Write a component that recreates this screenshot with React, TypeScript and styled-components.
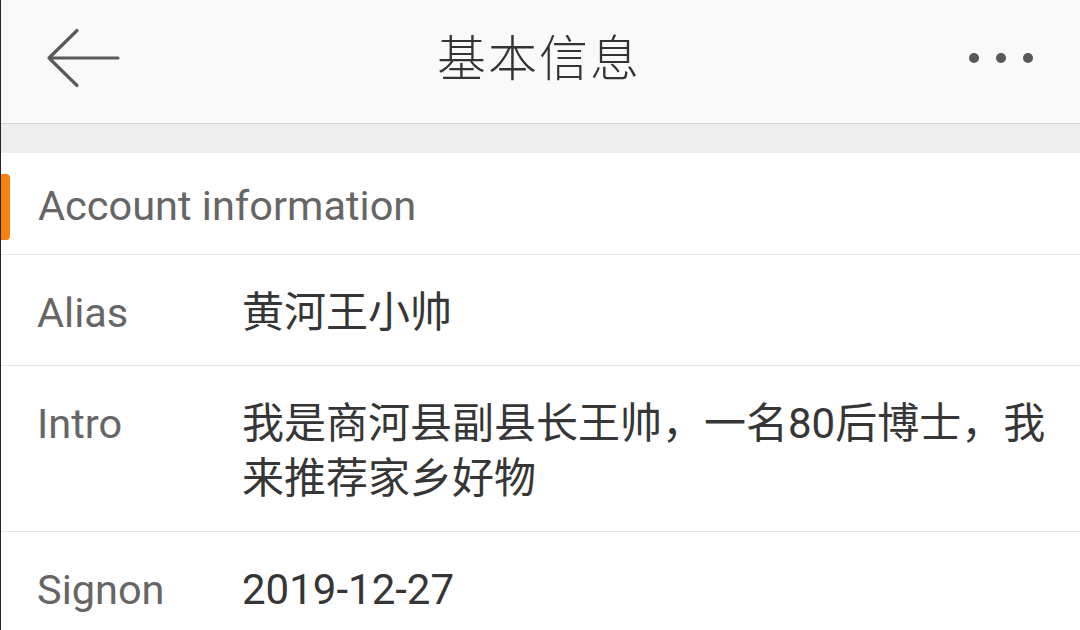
import React from "react";
import styled, { createGlobalStyle } from "styled-components";

const GlobalStyle = createGlobalStyle`
  html, body {
    margin: 0;
    padding: 0;
    background: #ffffff;
    overflow: hidden;
  }
  * { box-sizing: border-box; }
`;

const Page = styled.div`
  width: 1080px;
  height: 630px;
  overflow: hidden;
  border-left: 1px solid #262626;
  background: #fefefe;
  font-family: "Roboto", "Noto Sans CJK SC", sans-serif;
`;

const Header = styled.header`
  height: 124px;
  background: #f9f9f9;
  border-bottom: 1px solid #d2d2d2;
  display: grid;
  grid-template-columns: 1fr auto 1fr;
  align-items: center;
  padding: 0 47px 8px 44px;
`;

const BackButton = styled.button`
  justify-self: start;
  border: none;
  background: none;
  padding: 0;
  display: flex;
  cursor: pointer;
`;

const Title = styled.h1`
  margin: 0 0 6px;
  font-family: "Noto Sans CJK SC", sans-serif;
  font-size: 49px;
  font-weight: 300;
  color: #333333;
  letter-spacing: 2px;
  line-height: 1;
`;

const MoreButton = styled.div`
  justify-self: end;
  display: flex;
  gap: 17px;
  align-items: center;
`;

const Dot = styled.span`
  width: 10px;
  height: 10px;
  border-radius: 50%;
  background: #585858;
`;

const Band = styled.div`
  height: 29px;
  background: #eeeeee;
`;

const SectionHead = styled.div`
  height: 102px;
  display: flex;
  align-items: center;
  border-bottom: 1px solid #e6e6e6;
  background: #ffffff;
`;

const Accent = styled.span`
  width: 9px;
  height: 66px;
  background: #f7830e;
  border-radius: 0 4px 4px 0;
  margin-top: 6px;
`;

const SectionTitle = styled.span`
  margin-left: 28px;
  font-size: 41.5px;
  color: #666666;
  margin-top: 4px;
`;

const Row = styled.div`
  display: grid;
  grid-template-columns: 205px 1fr;
  align-items: start;
  padding: 30px 20px 25px 36px;
  border-bottom: 1px solid #e7e4e8;
  background: #ffffff;
`;

const Label = styled.span`
  font-size: 41.5px;
  line-height: 55px;
  color: #666666;
`;

const Value = styled.span`
  font-size: 42px;
  line-height: 55px;
  color: #363636;
`;

const rows = [
  { label: "Alias", value: "黄河王小帅" },
  { label: "Intro", value: "我是商河县副县长王帅，一名80后博士，我来推荐家乡好物" },
  { label: "Signon", value: "2019-12-27" },
];

export default function App() {
  return (
    <>
      <GlobalStyle />
      <Page>
        <Header>
          <BackButton aria-label="back">
            <svg width="76" height="60" viewBox="0 0 76 60" fill="none">
              <path
                d="M4 30 H73 M4 30 L32 2.5 M4 30 L32 57.5"
                stroke="#5a5a5a"
                strokeWidth="3.2"
                strokeLinecap="round"
                strokeLinejoin="round"
              />
            </svg>
          </BackButton>
          <Title>基本信息</Title>
          <MoreButton>
            <Dot />
            <Dot />
            <Dot />
          </MoreButton>
        </Header>
        <Band />
        <SectionHead>
          <Accent />
          <SectionTitle>Account information</SectionTitle>
        </SectionHead>
        {rows.map((r) => (
          <Row key={r.label}>
            <Label>{r.label}</Label>
            <Value>{r.value}</Value>
          </Row>
        ))}
      </Page>
    </>
  );
}
